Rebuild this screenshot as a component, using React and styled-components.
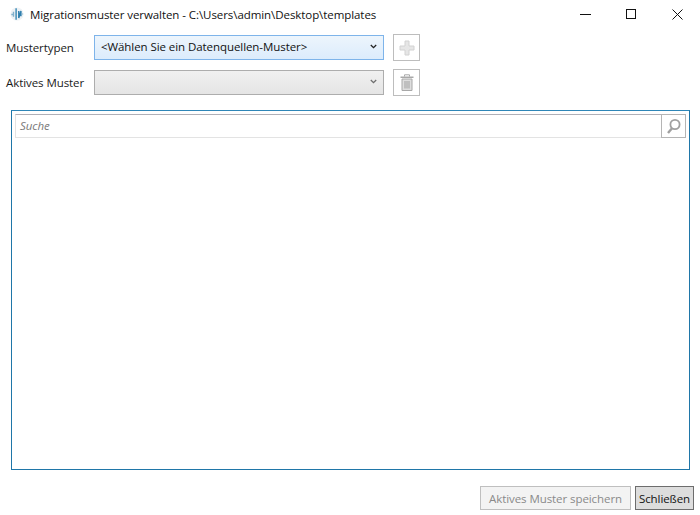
import React from 'react'
import styled, { createGlobalStyle } from 'styled-components'

const Global = createGlobalStyle`
  html, body { margin: 0; padding: 0; background: #fff; }
  * { box-sizing: border-box; }
`

const Logo = () => (
  <svg width="14" height="14" viewBox="0 0 16 16">
    <circle cx="8" cy="8" r="7.5" fill="#eef2f5" />
    <path d="M1.5 8.5h3M4 5.5v5.5" stroke="#7fb0cc" strokeWidth="1.6" fill="none" />
    <path d="M7 1.5v13" stroke="#5b9cc0" strokeWidth="2" fill="none" />
    <path d="M10 4.5v8L12.5 4.5v6" stroke="#2f7fae" strokeWidth="1.6" fill="none" />
    <path d="M13 8h2" stroke="#8fb9d0" strokeWidth="1.2" />
  </svg>
)

const Chevron = ({ disabled }) => (
  <svg width="7" height="5" viewBox="0 0 7 5">
    <path d="M0.8 1L3.5 3.7L6.2 1" fill="none" stroke={disabled ? '#6d6d6d' : '#222'} strokeWidth="1.3" />
  </svg>
)

const PlusIcon = () => (
  <svg width="16" height="16" viewBox="0 0 16 16">
    <path d="M6 1h4v5h5v4h-5v5H6v-5H1V6h5z" fill="#e6e6e6" stroke="#d2d2d2" strokeWidth="1" />
  </svg>
)

const TrashIcon = () => (
  <svg width="14" height="17" viewBox="0 0 14 17">
    <path d="M4.5 2.5V0.8h5v1.7" fill="none" stroke="#a8a8a8" strokeWidth="1" />
    <path d="M0.5 2.5h13v1.5h-13z" fill="#a8a8a8" />
    <path d="M2 5h10v11.5H2z" fill="#dedede" stroke="#a8a8a8" strokeWidth="1" />
    <path d="M5 7v7.5M7 7v7.5M9 7v7.5" stroke="#a0a0a0" strokeWidth="1" />
  </svg>
)

const SearchIcon = () => (
  <svg width="17" height="17" viewBox="0 0 17 17">
    <circle cx="10" cy="6.5" r="4.6" fill="none" stroke="#a0a0a0" strokeWidth="1.8" />
    <path d="M7 10.2L3 15" stroke="#a0a0a0" strokeWidth="2.4" />
  </svg>
)

const Window = styled.div`
  width: 700px;
  height: 515px;
  display: flex;
  flex-direction: column;
  background: #fff;
  font-family: "Open Sans", "Noto Sans", sans-serif;
  font-size: 11.5px;
  letter-spacing: -0.07px;
  color: #1a1a1a;
  overflow: hidden;
`

const TitleBar = styled.div`
  height: 30px;
  flex: none;
  display: flex;
  align-items: center;
  padding: 0 0 2px 10px;
`

const TitleText = styled.div`
  margin-left: 6px;
  flex: 1;
  color: #111;
  white-space: nowrap;
`

const WinButton = styled.div`
  width: 46px;
  height: 28px;
  display: flex;
  align-items: center;
  justify-content: center;
`

const Form = styled.div`
  flex: none;
  padding: 4px 0 0 6px;
  display: flex;
  flex-direction: column;
  gap: 8px;
`

const Row = styled.div`
  display: flex;
  align-items: center;
  height: 27px;
`

const Label = styled.div`
  width: 88px;
  flex: none;
  white-space: nowrap;
`

const Combo = styled.div`
  width: 290px;
  height: 25px;
  display: flex;
  align-items: center;
  justify-content: space-between;
  padding: 0 4px 2px 6px;
  border: 1px solid ${p => (p.$disabled ? '#adadad' : '#7eb4ea')};
  background: ${p =>
    p.$disabled
      ? 'linear-gradient(#f0f0f0, #e5e5e5)'
      : 'linear-gradient(#edf5fc, #dcecfc)'};
  color: #111;
`

const ChevronBox = styled.span`
  width: 12px;
  display: flex;
  justify-content: center;
`

const IconButton = styled.div`
  width: 27px;
  height: 27px;
  margin-left: 9px;
  display: flex;
  align-items: center;
  justify-content: center;
  border: 1px solid #bdbdbd;
  background: #fff;
`

const Panel = styled.div`
  flex: none;
  width: 679px;
  height: 360px;
  margin: 14px 0 0 11px;
  padding: 3px;
  border: 1px solid #1f76a8;
  border-top-color: #2f86b8;
`

const SearchBox = styled.div`
  height: 24px;
  display: flex;
  align-items: stretch;
  border: 1px solid #e3e3e3;
  border-top-color: #b0b0b8;
`

const SearchText = styled.div`
  flex: 1;
  padding: 0 0 2px 4px;
  display: flex;
  align-items: center;
  font-style: italic;
  color: #7a7a7a;
`

const SearchButton = styled.div`
  width: 25px;
  margin: -1px -1px -1px 0;
  display: flex;
  align-items: center;
  justify-content: center;
  border: 1px solid #b5b5b5;
  background: #fff;
`

const Footer = styled.div`
  flex: none;
  margin-top: 16px;
  padding-right: 6px;
  display: flex;
  justify-content: flex-end;
  gap: 4px;
`

const FooterButton = styled.div`
  height: 24px;
  width: ${p => p.$width}px;
  display: flex;
  align-items: center;
  justify-content: center;
  white-space: nowrap;
  border: 1px solid ${p => (p.$disabled ? '#bfbfbf' : '#6d6d6d')};
  background: ${p => (p.$disabled ? '#f3f3f3' : '#dddddd')};
  color: ${p => (p.$disabled ? '#8a8a8a' : '#111')};
`

export default function App() {
  return (
    <Window>
      <Global />
      <TitleBar>
        <Logo />
        <TitleText>Migrationsmuster verwalten - C:\Users\admin\Desktop\templates</TitleText>
        <WinButton>
          <svg width="11" height="1"><rect width="11" height="1" fill="#111" /></svg>
        </WinButton>
        <WinButton>
          <svg width="10" height="10"><rect x="0.5" y="0.5" width="9" height="9" fill="none" stroke="#111" /></svg>
        </WinButton>
        <WinButton>
          <svg width="11" height="11"><path d="M0.5 0.5L10.5 10.5M10.5 0.5L0.5 10.5" stroke="#111" fill="none" /></svg>
        </WinButton>
      </TitleBar>
      <Form>
        <Row>
          <Label>Mustertypen</Label>
          <Combo>
            &lt;Wählen Sie ein Datenquellen-Muster&gt;
            <ChevronBox><Chevron /></ChevronBox>
          </Combo>
          <IconButton><PlusIcon /></IconButton>
        </Row>
        <Row>
          <Label>Aktives Muster</Label>
          <Combo $disabled>
            <span />
            <ChevronBox><Chevron disabled /></ChevronBox>
          </Combo>
          <IconButton><TrashIcon /></IconButton>
        </Row>
      </Form>
      <Panel>
        <SearchBox>
          <SearchText>Suche</SearchText>
          <SearchButton><SearchIcon /></SearchButton>
        </SearchBox>
      </Panel>
      <Footer>
        <FooterButton $disabled $width={151}>Aktives Muster speichern</FooterButton>
        <FooterButton $width={59}>Schließen</FooterButton>
      </Footer>
    </Window>
  )
}
